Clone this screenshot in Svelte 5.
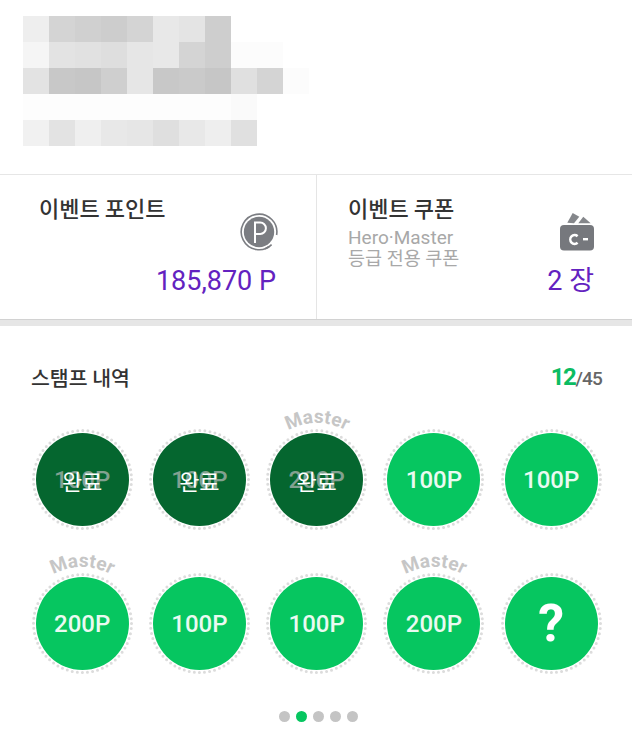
<script>
	const blurRows = [
		['#eee', '#d4d4d4', '#d0d0d0', '#cdcdcd', '#d4d4d4', '#e8e8e8', '#e4e4e4', '#cecece'],
		['#f5f5f5', '#e3e3e3', '#e1e1e1', '#dedede', '#e6e6e6', '#e8e8e8', '#d4d4d4', '#cecece', '#fcfcfc', '#fcfcfc'],
		['#e3e3e3', '#c8c8c8', '#c6c6c6', '#cfcfcf', '#e6e6e6', '#c8c8c8', '#cacaca', '#c6c6c6', '#e0e0e0', '#d4d4d4', '#fcfcfc'],
		['#fdfdfd', '#fdfdfd', '#fdfdfd', '#fdfdfd', '#fdfdfd', '#fdfdfd', '#fdfdfd', '#fdfdfd', '#fafafa'],
		['#f1f1f1', '#e3e3e3', '#efefef', '#e8e8e8', '#e6e6e6', '#dfdfdf', '#e8e8e8', '#eee', '#e0e0e0']
	];

	const stamps = [
		{ label: '100P', done: true },
		{ label: '100P', done: true },
		{ label: '200P', done: true, master: true },
		{ label: '100P' },
		{ label: '100P' },
		{ label: '200P', master: true },
		{ label: '100P' },
		{ label: '100P' },
		{ label: '200P', master: true },
		{ label: '?', mystery: true }
	];
</script>

<div class="page">
	<div class="blur">
		{#each blurRows as row}
			<div class="blur-row">
				{#each row as color}
					<span class="cell" style:background={color}></span>
				{/each}
			</div>
		{/each}
	</div>

	<div class="summary">
		<div class="card">
			<div class="info">
				<h3>이벤트 포인트</h3>
			</div>
			<div class="value">
				<svg class="icon" viewBox="0 0 38 38" width="38" height="38">
					<circle cx="19" cy="19" r="15.2" fill="#7b7d82" />
					<path d="M31.6 31.6A17.8 17.8 0 1 1 36.6 22" fill="none" stroke="#7b7d82" stroke-width="1.6" />
					<path d="M29 33.5A17.8 17.8 0 0 1 25 35.8" fill="none" stroke="#7b7d82" stroke-width="1.6" />
					<path d="M15 30V9.5h5.2a5.7 5.7 0 0 1 0 11.4H15" fill="none" stroke="#fff" stroke-width="2" />
				</svg>
				<span class="amount">185,870 P</span>
			</div>
		</div>
		<div class="card">
			<div class="info">
				<h3>이벤트 쿠폰</h3>
				<p>Hero·Master<br /><span class="grade">등급 전용 쿠폰</span></p>
			</div>
			<div class="value">
				<svg class="icon" viewBox="0 0 34 38" width="34" height="38">
					<path d="M7.3 9.8 12.7 0l6.6 3.7L14 10.3z" fill="#85878b" />
					<path d="M18.3 10.3l5-6.6 7.4 6.6z" fill="#85878b" />
					<rect x="0" y="12" width="34" height="25.5" rx="4" fill="#76787d" />
					<path d="M17.6 23.2a4.4 4.4 0 1 0 0 6.6" fill="none" stroke="#fff" stroke-width="2.5" />
					<rect x="23" y="25" width="5" height="2.4" fill="#fff" />
				</svg>
				<span class="amount coupon-count">2 장</span>
			</div>
		</div>
	</div>
	<div class="band"></div>

	<div class="stamps">
		<div class="stamps-head">
			<h2>스탬프 내역</h2>
			<div class="count"><strong>12</strong>/45</div>
		</div>

		<div class="stamp-grid">
			{#each stamps as stamp, i}
				<div class="stamp">
					{#if stamp.master}
						<svg class="master" viewBox="0 0 80 30" width="80" height="30">
							<defs>
								<path id="arc{i}" d="M3 36A59 59 0 0 1 77 36" />
							</defs>
							<text><textPath href="#arc{i}" startOffset="50%" text-anchor="middle">Master</textPath></text>
						</svg>
					{/if}
					<div class="ring">
						<svg class="dotted" viewBox="0 0 101 101" width="101" height="101">
							<circle cx="50.5" cy="50.5" r="49" fill="none" stroke="#dcdcdc" stroke-width="3" stroke-linecap="round" stroke-dasharray="0 5.13" />
						</svg>
						<div class="disc" class:done={stamp.done}>
							<span class="label" class:mystery={stamp.mystery}>{stamp.label}</span>
							{#if stamp.done}
								<span class="done-text">완료</span>
							{/if}
						</div>
					</div>
				</div>
			{/each}
		</div>

		<div class="dots">
			{#each [0, 1, 2, 3, 4] as d}
				<span class="dot" class:active={d === 1}></span>
			{/each}
		</div>
	</div>
</div>

<style>
	:global(body) {
		background: #fff;
	}

	.page {
		width: 632px;
		height: 736px;
		overflow: hidden;
		background: #fff;
		font-family: Roboto, 'Noto Sans CJK KR', sans-serif;
	}

	.blur {
		height: 174px;
		box-sizing: border-box;
		padding: 16px 0 0 23px;
	}

	.blur-row {
		display: flex;
		height: 26px;
	}

	.cell {
		width: 26px;
		height: 26px;
	}

	.summary {
		display: grid;
		grid-template-columns: 317px 315px;
		height: 146px;
		box-sizing: border-box;
		border-top: 1px solid #e6e6e6;
		border-bottom: 1px solid #d2d2d2;
	}

	.band {
		height: 6px;
		background: #e6e6e6;
	}

	.card {
		display: flex;
		justify-content: space-between;
		box-sizing: border-box;
		padding: 18px 40px 0 39px;
	}

	.card:first-child {
		border-right: 1px solid #e5e5e5;
	}

	.card:last-child {
		padding-left: 31px;
	}

	.info {
		flex-shrink: 0;
	}

	.info h3 {
		margin: 0;
		font-family: 'Noto Sans CJK KR', sans-serif;
		font-size: 22px;
		font-weight: 500;
		line-height: 29px;
		white-space: nowrap;
		color: #333;
	}

	.info p {
		margin: 5px 0 0;
		font-size: 19px;
		line-height: 21px;
		white-space: nowrap;
		color: #a8a8a8;
	}

	.grade {
		font-size: 18.5px;
	}

	.value {
		display: flex;
		flex-direction: column;
		align-items: flex-end;
		flex-shrink: 0;
		width: 80px;
	}

	.icon {
		display: block;
		margin: 20px -2px 0 0;
	}

	.amount {
		margin-top: 14px;
		font-size: 27px;
		line-height: 32px;
		white-space: nowrap;
		color: #6322c0;
	}

	.coupon-count {
		margin-right: -2px;
	}

	.stamps-head {
		display: flex;
		justify-content: space-between;
		align-items: center;
		padding: 37px 30px 0 31px;
		height: 28px;
	}

	.stamps-head h2 {
		margin: 0;
		font-family: 'Noto Sans CJK KR', sans-serif;
		font-size: 20.5px;
		font-weight: 500;
		color: #333;
	}

	.count {
		font-size: 19px;
		font-weight: 500;
		color: #666;
		letter-spacing: -0.8px;
	}

	.count strong {
		font-size: 24px;
		font-weight: 700;
		color: #0cbc62;
		letter-spacing: -1.5px;
	}

	.stamp-grid {
		display: grid;
		grid-template-columns: repeat(5, 117.25px);
		grid-auto-rows: 144px;
		padding: 24px 0 0 23.5px;
		margin-top: 14px;
	}

	.stamp {
		display: flex;
		justify-content: center;
		align-items: flex-start;
		position: relative;
	}

	.ring {
		display: grid;
		place-items: center;
		position: relative;
		width: 101px;
		height: 101px;
	}

	.dotted {
		position: absolute;
		left: 0;
		top: 0;
	}

	.disc {
		display: grid;
		place-items: center;
		width: 93px;
		height: 93px;
		border-radius: 50%;
		background: #06c660;
		color: #eafaf1;
	}

	.disc.done {
		background: #05662f;
	}

	.disc > span {
		grid-area: 1 / 1;
	}

	.label {
		font-size: 24px;
		font-weight: 500;
		line-height: 28px;
	}

	.label.mystery {
		font-size: 52px;
		font-weight: 700;
		line-height: 56px;
		color: #fff;
	}

	.done .label {
		color: #82a190;
	}

	.done-text {
		font-family: 'Noto Sans CJK KR', sans-serif;
		font-size: 22px;
		line-height: 28px;
		color: #fff;
	}

	.master {
		position: absolute;
		left: 50%;
		top: -29px;
		margin-left: -40px;
		overflow: visible;
	}

	.master text {
		font-family: Roboto, sans-serif;
		font-size: 19px;
		font-weight: 700;
		fill: #c6c6c6;
	}

	.dots {
		display: flex;
		justify-content: center;
		gap: 6px;
		margin-top: -6px;
		padding-left: 4px;
	}

	.dot {
		width: 11px;
		height: 11px;
		border-radius: 50%;
		background: #c4c4c4;
	}

	.dot.active {
		background: #06c660;
	}
</style>
